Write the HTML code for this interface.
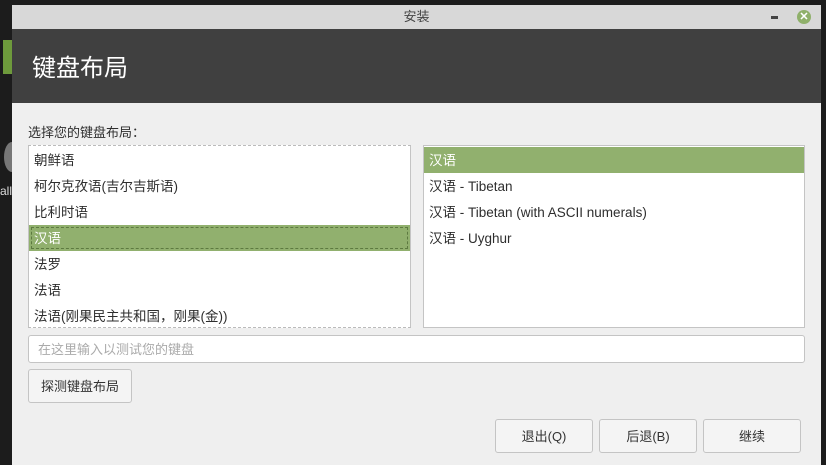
<!DOCTYPE html>
<html><head><meta charset="utf-8"><style>
*{margin:0;padding:0;box-sizing:border-box}
body{width:826px;height:465px;background:#1c1c1c;position:relative;overflow:hidden;font-family:"Liberation Sans","Noto Sans CJK SC",sans-serif;font-size:13px;color:#2e2e2e}
.a{position:absolute}
.win{left:12px;top:5px;width:809px;height:460px;background:#efefef}
.tb{left:0;top:0;width:809px;height:24px;background:#d8d8d8;text-align:center;line-height:24px;color:#444;font-size:13px}
.hd{left:0;top:24px;width:809px;height:74px;background:#404040;color:#fff;font-size:24px;line-height:80px;padding-left:20px}
.list{background:#fff;border:1px solid #c4c4c4}
.row{position:absolute;left:0;right:0;height:26px;line-height:27px;padding-left:5px;white-space:nowrap;font-size:13.5px}
.sel{background:#91b06e;color:#fff}
.btn{position:absolute;background:#f4f4f4;border:1px solid #c4c4c4;border-radius:3px;text-align:center;font-size:13px;color:#333}
</style></head><body>
<div class="a" style="left:3px;top:40px;width:9px;height:34px;background:#6e9a3c"></div>
<div class="a" style="left:4px;top:142px;width:16px;height:30px;border-radius:50%;background:#777"></div>
<div class="a" style="left:0;top:184px;color:#ddd;font-size:12px">all</div>
<div class="a win">
<div class="a tb">安装</div>
<div class="a" style="left:759px;top:11px;width:7px;height:3px;background:#444"></div>
<div class="a" style="left:785px;top:5px;width:14px;height:14px;border-radius:50%;background:#8fb06a;color:#fff;font-size:11px;line-height:14px;text-align:center;font-weight:bold">✕</div>
<div class="a hd">键盘布局</div>
</div>
<div class="a" style="left:28px;top:122px;font-size:13px">选择您的键盘布局：</div>
<div class="a list" style="left:28px;top:145px;width:383px;height:183px;border-top:1px dashed #bbb;border-bottom:1px dashed #bbb;overflow:hidden">
<div class="row" style="top:1px">朝鲜语</div>
<div class="row" style="top:27px">柯尔克孜语(吉尔吉斯语)</div>
<div class="row" style="top:53px">比利时语</div>
<div class="row sel" style="top:79px;outline:1px dashed #5d7a40;outline-offset:-3px">汉语</div>
<div class="row" style="top:105px">法罗</div>
<div class="row" style="top:131px">法语</div>
<div class="row" style="top:157px">法语(刚果民主共和国，刚果(金))</div>
</div>
<div class="a list" style="left:423px;top:145px;width:382px;height:183px">
<div class="row sel" style="top:1px">汉语</div>
<div class="row" style="top:27px">汉语 - Tibetan</div>
<div class="row" style="top:53px">汉语 - Tibetan (with ASCII numerals)</div>
<div class="row" style="top:79px">汉语 - Uyghur</div>
</div>
<div class="a" style="left:28px;top:335px;width:777px;height:28px;background:#fff;border:1px solid #c4c4c4;border-radius:3px;color:#aaa;line-height:28px;padding-left:9px">在这里输入以测试您的键盘</div>
<div class="btn" style="left:28px;top:369px;width:104px;height:34px;line-height:33px">探测键盘布局</div>
<div class="btn" style="left:495px;top:419px;width:98px;height:34px;line-height:33px">退出(Q)</div>
<div class="btn" style="left:599px;top:419px;width:98px;height:34px;line-height:33px">后退(B)</div>
<div class="btn" style="left:703px;top:419px;width:98px;height:34px;line-height:33px">继续</div>
</body></html>
